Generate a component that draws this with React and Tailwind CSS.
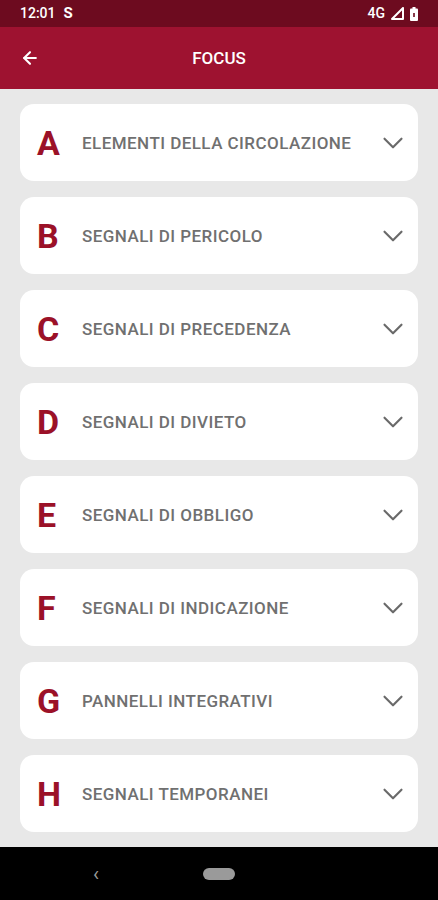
import { ArrowLeft, ChevronDown } from 'lucide-react'

const SEZIONI = [
  ["A", "ELEMENTI DELLA CIRCOLAZIONE"],
  ["B", "SEGNALI DI PERICOLO"],
  ["C", "SEGNALI DI PRECEDENZA"],
  ["D", "SEGNALI DI DIVIETO"],
  ["E", "SEGNALI DI OBBLIGO"],
  ["F", "SEGNALI DI INDICAZIONE"],
  ["G", "PANNELLI INTEGRATIVI"],
  ["H", "SEGNALI TEMPORANEI"],
]

function StatusBar() {
  return (
    <div className="h-[27px] bg-[#6d0b1f] flex items-center justify-between px-5 text-white text-[14px] font-medium">
      <div className="flex items-center gap-2">
        <span>12:01</span>
        <span className="text-[15px] font-bold">S</span>
      </div>
      <div className="flex items-center gap-1.5">
        <span>4G</span>
        <svg width="13" height="13" viewBox="0 0 13 13">
          <path d="M12 1 L12 12 L1 12 Z" fill="none" stroke="white" strokeWidth="2" strokeLinejoin="round" />
        </svg>
        <svg width="8" height="14" viewBox="0 0 8 14">
          <rect x="2.5" y="0" width="3" height="2" fill="white" />
          <rect x="0" y="1.5" width="8" height="12.5" rx="1" fill="white" />
          <rect x="3.2" y="6" width="1.6" height="4" fill="#6d0b1f" />
        </svg>
      </div>
    </div>
  )
}

function AppBar() {
  return (
    <div className="h-[62px] bg-[#9e1230] flex items-center px-5 relative text-white">
      <ArrowLeft size={20} strokeWidth={2.5} />
      <div className="absolute inset-0 flex items-center justify-center pt-0.5 text-[17px] font-medium">FOCUS</div>
    </div>
  )
}

function Card({ lettera, titolo }) {
  return (
    <div className="h-[77px] bg-white rounded-[14px] flex items-center pl-[17px] pr-2">
      <div className="w-[45px] text-[34px] font-bold text-[#9b1128] leading-none">{lettera}</div>
      <div className="flex-1 pt-0.5 text-[17px] font-medium text-[#707070] tracking-[0.45px]">{titolo}</div>
      <ChevronDown size={34} strokeWidth={1.5} className="text-[#6a6a6a]" />
    </div>
  )
}

export default function App() {
  return (
    <div className="w-[438px] h-[900px] flex flex-col bg-[#e8e8e8]" style={{ fontFamily: 'Roboto, "Liberation Sans", sans-serif' }}>
      <StatusBar />
      <AppBar />
      <div className="flex-1 flex flex-col gap-4 px-5 pt-[15px]">
        {SEZIONI.map(([l, t]) => (
          <Card key={l} lettera={l} titolo={t} />
        ))}
      </div>
      <div className="h-[53px] bg-black flex items-center justify-center relative">
        <span className="absolute left-[93px] text-[#9a9a9a] text-[20px] leading-none">‹</span>
        <div className="w-[32px] h-[12px] rounded-full bg-[#9a9a9a]" />
      </div>
    </div>
  )
}
